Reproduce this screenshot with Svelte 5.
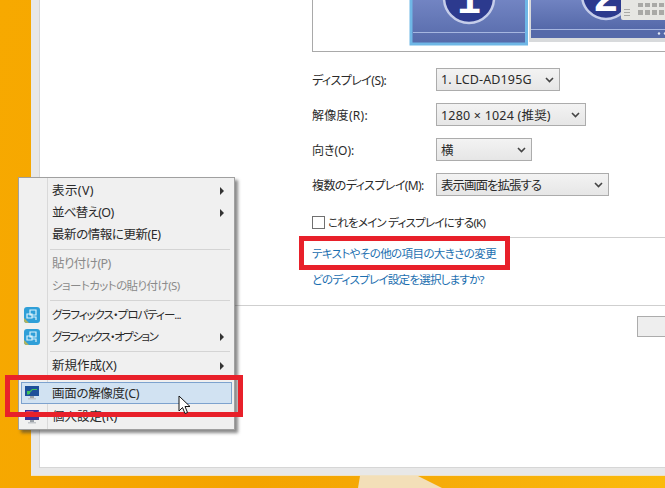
<script>
  const rows = [
    { label: 'ディスプレイ(S):', ls: -0.55, value: '1. LCD-AD195G', vs: 0.15, w: 124 },
    { label: '解像度(R):', ls: 0.3, value: '1280 × 1024 (推奨)', vs: 0.2, w: 150 },
    { label: '向き(O):', ls: 0, value: '横', vs: 0, w: 96 },
    { label: '複数のディスプレイ(M):', ls: -0.6, value: '表示画面を拡張する', vs: -1, w: 173 }
  ];
</script>

<div class="desk">
  <div class="wedge"></div>
  <div class="window">
    <div class="inner">
      <div class="content">
        <div class="preview">
          <svg width="353" height="52" viewBox="312 0 353 52">
            <defs>
              <linearGradient id="mon" x1="0" y1="0" x2="0" y2="1">
                <stop offset="0" stop-color="#7688c6" />
                <stop offset="1" stop-color="#5569a9" />
              </linearGradient>
            </defs>
            <rect x="528" y="-6" width="140" height="48" fill="#d8dadc" />
            <rect x="530" y="-6" width="140" height="35" fill="url(#mon)" />
            <rect x="530" y="29" width="140" height="1" fill="#a6b6e0" />
            <rect x="530" y="30" width="140" height="8" fill="#5569a9" />
            <circle cx="605" cy="-5" r="24" fill="#2c3a8e" stroke="#c5cdea" stroke-width="2.5" />
            <text x="605" y="11" class="num">2</text>
            <rect x="620" y="-4" width="50" height="24" rx="2" fill="#e6e6e2" />
            <g fill="#a9a9a6">
              <rect x="637" y="3" width="5" height="4" /><rect x="644" y="3" width="5" height="4" /><rect x="651" y="3" width="5" height="4" /><rect x="658" y="3" width="5" height="4" />
              <rect x="637" y="10" width="5" height="5" /><rect x="644" y="10" width="5" height="5" /><rect x="651" y="10" width="5" height="5" /><rect x="658" y="10" width="5" height="5" />
              <rect x="623" y="9" width="6" height="1" /><rect x="623" y="12" width="6" height="1" /><rect x="623" y="15" width="6" height="1" />
            </g>
            <circle cx="658" cy="33.5" r="1.2" fill="#dfe6f5" />
            <circle cx="664" cy="33.5" r="1.2" fill="#dfe6f5" />
            <rect x="410" y="-6" width="115.5" height="50" fill="url(#mon)" stroke="#6fb7e6" stroke-width="3" />
            <rect x="412" y="32" width="112" height="1" fill="#a6b6e0" />
            <circle cx="468" cy="-2" r="25" fill="#2c3a8e" stroke="#c5cdea" stroke-width="2.5" />
            <text x="468" y="13" class="num">1</text>
          </svg>
        </div>

        <div class="rows">
          {#each rows as r}
            <div class="row">
              <span class="label" style="letter-spacing: {r.ls}px">{r.label}</span>
              <div class="select" style="width: {r.w}px">
                <span style="letter-spacing: {r.vs}px">{r.value}</span>
                <svg width="9" height="6" viewBox="0 0 9 6"><path d="M1 1l3.500 3.500L8 1" fill="none" stroke="#444" stroke-width="1.6" /></svg>
              </div>
            </div>
          {/each}
        </div>

        <div class="check"><span class="box"></span><span class="check-text">これをメイン ディスプレイにする(K)</span></div>
      </div>

      <div class="links">
        <div class="link first">テキストやその他の項目の大きさの変更</div>
        <div class="link second">どのディスプレイ設定を選択しますか?</div>
      </div>

      <div class="footer"><div class="btn"></div></div>
    </div>
  </div>

  <div class="menu">
    <div class="item"><span class="wide">表示(V)</span><i class="arrow"></i></div>
    <div class="item"><span class="sort">並べ替え(O)</span><i class="arrow"></i></div>
    <div class="item"><span class="refresh">最新の情報に更新(E)</span></div>
    <div class="sep"></div>
    <div class="item off"><span class="paste">貼り付け(P)</span></div>
    <div class="item off"><span class="shortcut">ショートカットの貼り付け(S)</span></div>
    <div class="sep"></div>
    <div class="item">
      <svg class="ico" width="16" height="16" viewBox="0 0 16 16"><rect width="16" height="16" rx="3" fill="#2f9fd8" /><path d="M0 11l5 5H3a3 3 0 0 1-3-3z" fill="#b5b35a" /><path d="M6 3h6v5H6zM3 7h5v4H3zM8 10h4v3" fill="none" stroke="#d9f1fb" stroke-width="1.2" /></svg>
      <span class="gprop">グラフィックス・プロパティー...</span>
    </div>
    <div class="item">
      <svg class="ico" width="16" height="16" viewBox="0 0 16 16"><rect width="16" height="16" rx="3" fill="#2f9fd8" /><path d="M0 11l5 5H3a3 3 0 0 1-3-3z" fill="#b5b35a" /><path d="M6 3h6v5H6zM3 7h5v4H3zM8 10h4v3" fill="none" stroke="#d9f1fb" stroke-width="1.2" /></svg>
      <span class="gopt">グラフィックス・オプション</span><i class="arrow"></i>
    </div>
    <div class="sep"></div>
    <div class="item"><span>新規作成(X)</span><i class="arrow"></i></div>
    <div class="sep last"></div>
    <div class="item hot">
      <svg class="ico" width="16" height="16" viewBox="0 0 16 16"><rect x="1" y="1" width="14" height="10" fill="#1d4f9a" /><path d="M3 9l5-5h5v1H8.500L4 10z" fill="#3fc25a" /><path d="M3 6h3v3H3z" fill="#3fc25a" /><rect x="6" y="11" width="4" height="2" fill="#9aa0a6" /><rect x="4" y="13" width="8" height="1.500" fill="#c2c5c9" /></svg>
      <span class="res">画面の解像度(C)</span>
    </div>
    <div class="item">
      <svg class="ico" width="16" height="16" viewBox="0 0 16 16"><rect x="1" y="1" width="14" height="10" fill="#3a2f9a" /><path d="M2 2h8L4 8z" fill="#c0457a" /><path d="M15 1l-5 6 5 0z" fill="#7a4fb0" /><rect x="6" y="11" width="4" height="2" fill="#9aa0a6" /><rect x="4" y="13" width="8" height="1.500" fill="#c2c5c9" /></svg>
      <span>個人設定(R)</span>
    </div>
  </div>

  <div class="mark mark-link"></div>
  <div class="mark mark-menu"></div>

  <svg class="cursor" width="14" height="21" viewBox="0 0 14 21">
    <path d="M1 1v15l3.500-3.500 2.500 6 2.500-1-2.500-6h5z" fill="#fff" stroke="#111" stroke-width="1" />
  </svg>
</div>

<style>
  :global(body) {
    margin: 0;
  }
  .desk {
    position: relative;
    width: 665px;
    height: 488px;
    overflow: hidden;
    background: linear-gradient(100deg, #f7a900 0%, #f4a400 45%, #f6ac08 70%, #fbbb0c 100%);
    font-family: "Noto Sans", "Noto Sans CJK JP", sans-serif;
    font-size: 12px;
    font-feature-settings: "palt";
    color: #2a2a2a;
  }
  .wedge {
    position: absolute;
    left: 352px;
    top: 476px;
    width: 90px;
    height: 12px;
    background: #f3dfb8;
    clip-path: polygon(8px 0, 66px 0, 90px 12px, 6px 12px);
  }
  .window {
    position: absolute;
    left: 31px;
    top: -10px;
    width: 660px;
    height: 486px;
    box-sizing: border-box;
    padding: 0 0 7px 8px;
    background: #e8e8e8;
    border-bottom: 1px solid #f0e2c4;
  }
  .inner {
    height: 100%;
    box-sizing: border-box;
    background: #fff;
    border-bottom: 1px solid #d6d6d6;
    border-left: 1px solid #d6d6d6;
    padding-top: 10px;
  }
  .content {
    padding-left: 272px;
  }
  .preview {
    height: 52px;
    box-sizing: border-box;
    border: 1px solid #a9a9a9;
    border-top: 0;
    border-right: 0;
    overflow: hidden;
  }
  .preview svg {
    display: block;
  }
  .num {
    font-family: "Liberation Sans", sans-serif;
    font-weight: 700;
    font-size: 42px;
    fill: #fff;
    text-anchor: middle;
  }
  .rows {
    padding-top: 16px;
    display: flex;
    flex-direction: column;
    gap: 12px;
  }
  .row {
    display: flex;
    align-items: center;
    height: 23px;
  }
  .label {
    width: 124px;
    white-space: nowrap;
  }
  .select {
    box-sizing: border-box;
    height: 23px;
    display: flex;
    align-items: center;
    justify-content: space-between;
    padding: 0 5px 0 4px;
    border: 1px solid #acacac;
    background: linear-gradient(#f3f3f3, #e6e6e6);
    white-space: nowrap;
    font-size: 12.5px;
  }
  .check {
    display: flex;
    align-items: center;
    gap: 3px;
    margin-top: 18px;
    height: 16px;
  }
  .check-text {
    margin-top: -1px;
    font-size: 11.5px;
    letter-spacing: -0.75px;
    white-space: nowrap;
  }
  .box {
    width: 11px;
    height: 11px;
    border: 1px solid #707070;
    background: #fff;
    flex: none;
  }
  .links {
    margin-left: 260px;
    margin-top: 7px;
    border-top: 1px solid #cfcfcf;
    padding: 7px 0 0 12px;
    height: 62px;
    box-sizing: border-box;
  }
  .link {
    color: #1c6fb0;
    line-height: 18px;
    white-space: nowrap;
    font-size: 11.5px;
    letter-spacing: -0.6px;
  }
  .link.first {
    margin-bottom: 8px;
  }
  .link.second {
    letter-spacing: -0.75px;
  }
  .footer {
    border-top: 1px solid #cfcfcf;
    padding: 10px 0 0 597px;
    margin-top: 6px;
  }
  .btn {
    width: 60px;
    height: 21px;
    box-sizing: border-box;
    border: 1px solid #acacac;
    background: #eee;
  }
  .menu {
    position: absolute;
    left: 18px;
    top: 177px;
    width: 217px;
    height: 253px;
    box-sizing: border-box;
    padding: 2px;
    background: linear-gradient(90deg, #f0f0f0 0 28px, #d9d9d9 28px 29px, #f0f0f0 29px);
    border: 1px solid #a0a0a0;
    box-shadow: 3px 3px 3px rgba(60, 60, 60, 0.6);
    font-size: 12.5px;
  }
  .item {
    position: relative;
    height: 22px;
    box-sizing: border-box;
    display: flex;
    align-items: center;
    padding-left: 31px;
    padding-bottom: 3px;
    white-space: nowrap;
  }
  .wide { letter-spacing: 0.4px; }
  .sort { letter-spacing: -0.7px; }
  .refresh { letter-spacing: -0.45px; }
  .paste { letter-spacing: -0.55px; }
  .shortcut { font-size: 11.5px; letter-spacing: -0.55px; }
  .gprop { font-size: 11.5px; letter-spacing: -1px; }
  .gopt { font-size: 11.5px; letter-spacing: -1.45px; }
  .res { letter-spacing: -0.3px; }
  .off {
    color: #8a8a8a;
  }
  .ico {
    position: absolute;
    left: 3px;
    top: 3px;
  }
  .arrow {
    position: absolute;
    right: 8px;
    top: 7px;
    width: 0;
    height: 0;
    border-left: 4px solid #333;
    border-top: 4px solid transparent;
    border-bottom: 4px solid transparent;
  }
  .sep {
    height: 1px;
    margin: 3px 2px 3px 29px;
    background: #d4d4d4;
  }
  .sep.last {
    background: transparent;
    margin: 0 0 4px 29px;
  }
  .hot {
    height: 22px;
    margin-bottom: 2px;
    padding-left: 30px;
    padding-bottom: 1px;
    background: #d1e2f2;
    border: 1px solid #7da2ce;
  }
  .hot .ico {
    left: 2px;
    top: 2px;
  }
  .mark {
    position: absolute;
    box-sizing: border-box;
    border: 5px solid #e8202a;
  }
  .mark-link {
    left: 299px;
    top: 236px;
    width: 211px;
    height: 34px;
  }
  .mark-menu {
    left: 5px;
    top: 375px;
    width: 238px;
    height: 42px;
  }
  .cursor {
    position: absolute;
    left: 178px;
    top: 395px;
  }
</style>
